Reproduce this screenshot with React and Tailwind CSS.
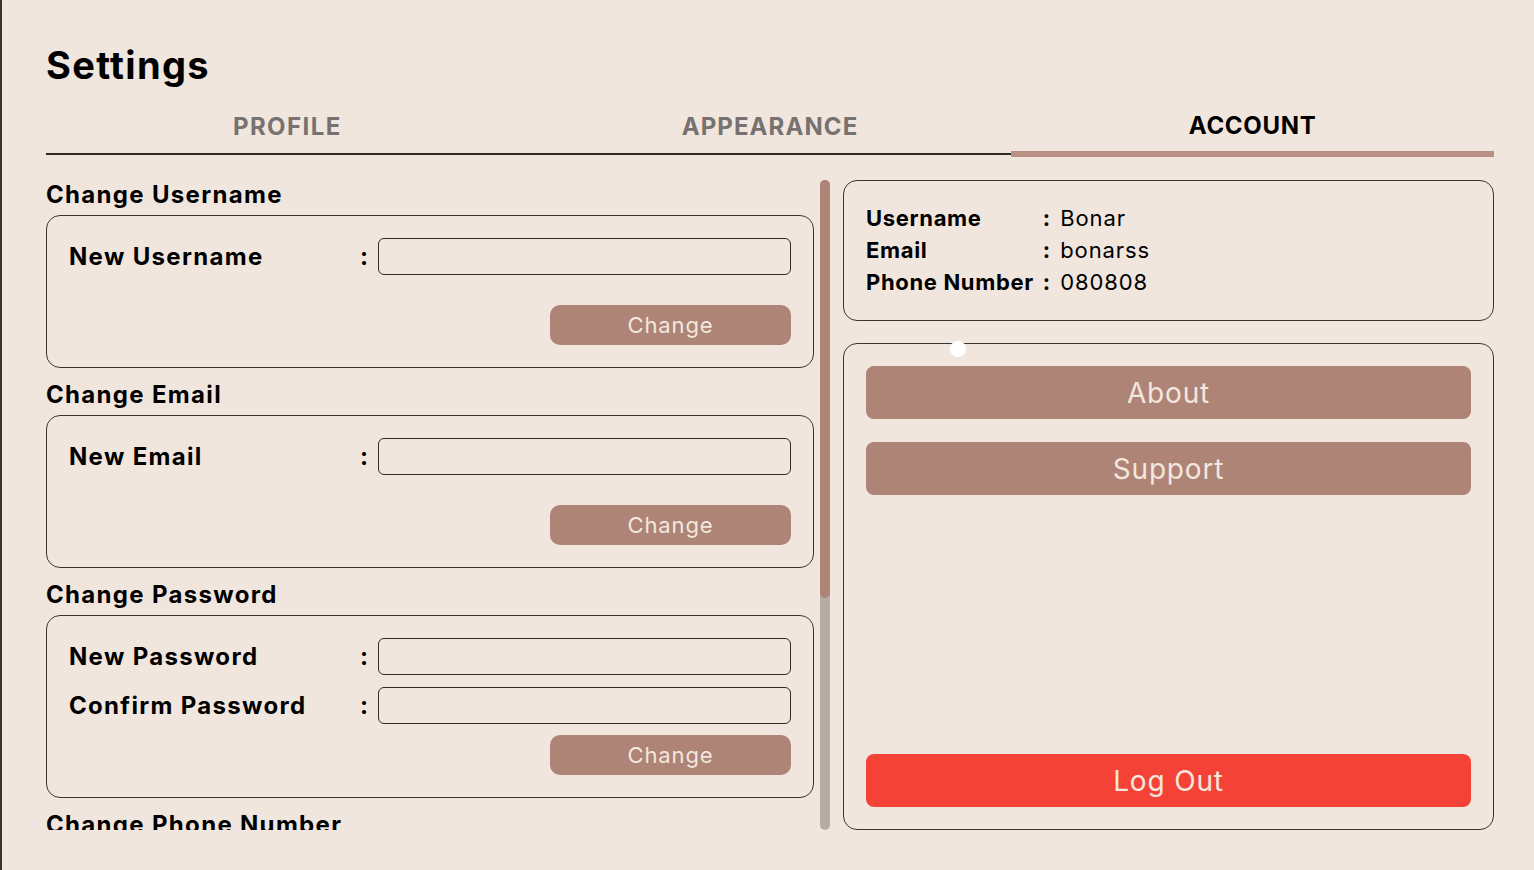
import React from 'react';

const font = { fontFamily: 'Inter, "Noto Sans", sans-serif' };

const Field = ({ label }) => (
  <div className="flex items-center">
    <span className="w-[288px] text-[24px] font-bold tracking-[0.055em] text-black">{label}</span>
    <span className="w-[14px] text-center text-[24px] font-bold text-black">:</span>
    <input
      type="text"
      className="ml-[7px] h-[37px] flex-1 rounded-[6px] border-[1.5px] border-[#2e2a28] bg-transparent px-2 outline-none"
    />
  </div>
);

const ChangeButton = ({ className = '' }) => (
  <button className={`ml-auto flex h-[40px] w-[241px] items-center justify-center rounded-[10px] bg-[#ae8477] text-[22px] tracking-[0.04em] text-[#f3e7de] ${className}`}>
    Change
  </button>
);

const Section = ({ title, children, className = '' }) => (
  <div className={className}>
    <h2 className="h-[28px] text-[24px] leading-[30px] font-bold tracking-[0.055em] text-black">{title}</h2>
    <div className="mt-[7px] rounded-[14px] border-[1.5px] border-[#3a3431] px-[22px] pt-[22px] pb-[22px]">
      {children}
    </div>
  </div>
);

const InfoRow = ({ label, value }) => (
  <>
    <span className="text-[22px] leading-[32px] font-bold tracking-[0.03em] text-black">{label}</span>
    <span className="pl-[9px] pr-[10px] text-[22px] leading-[32px] font-bold text-black">:</span>
    <span className="text-[22px] leading-[32px] tracking-[0.04em] text-black">{value}</span>
  </>
);

export default function App() {
  return (
    <div style={font} className="flex h-screen flex-col border-l-2 border-[#3a3330] bg-[#f0e6de] pt-[40px] pr-[40px] pb-[40px] pl-[44px]">
      <h1 className="text-[38px] leading-[50px] font-bold tracking-[0.035em] text-black">Settings</h1>

      <div className="mt-[10px] flex items-start">
        <div className="flex flex-1 flex-col">
          <div className="flex h-[53px] items-center justify-center text-[24px] font-bold tracking-[0.06em] text-[#777270]">PROFILE</div>
          <div className="h-[2px] bg-[#2f2a28]" />
        </div>
        <div className="flex flex-1 flex-col">
          <div className="flex h-[53px] items-center justify-center text-[24px] font-bold tracking-[0.045em] text-[#777270]">APPEARANCE</div>
          <div className="h-[2px] bg-[#2f2a28]" />
        </div>
        <div className="flex flex-1 flex-col">
          <div className="flex h-[51px] items-center justify-center text-[24px] font-bold tracking-[0.03em] text-black">ACCOUNT</div>
          <div className="h-[6px] bg-[#b89184]" />
        </div>
      </div>

      <div className="mt-[23px] flex min-h-0 flex-1">
        <div className="h-full w-[768px] overflow-hidden">
          <Section title="Change Username">
            <Field label="New Username" />
            <ChangeButton className="mt-[30px]" />
          </Section>

          <Section title="Change Email" className="mt-[12px]">
            <Field label="New Email" />
            <ChangeButton className="mt-[30px]" />
          </Section>

          <Section title="Change Password" className="mt-[12px]">
            <div className="flex flex-col gap-[12px]">
              <Field label="New Password" />
              <Field label="Confirm Password" />
            </div>
            <ChangeButton className="mt-[11px]" />
          </Section>

          <Section title="Change Phone Number" className="mt-[12px]">
            <Field label="New Phone Number" />
            <ChangeButton className="mt-[30px]" />
          </Section>
        </div>

        {/* scrollbar */}
        <div className="ml-[6px] flex h-full w-[10px] flex-col rounded-full bg-[#b5aca6]">
          <div className="h-[418px] rounded-full bg-[#ae8477]" />
        </div>

        <div className="ml-[13px] flex flex-1 flex-col gap-[22px]">
          <div className="rounded-[14px] border-[1.5px] border-[#3a3431] px-[22px] pt-[21px] pb-[22px]">
            <div className="grid grid-cols-[max-content_max-content_1fr]">
              <InfoRow label="Username" value="Bonar" />
              <InfoRow label="Email" value="bonarss" />
              <InfoRow label="Phone Number" value="080808" />
            </div>
          </div>

          <div className="relative flex flex-1 flex-col gap-[23px] rounded-[14px] border-[1.5px] border-[#3a3431] p-[22px]">
            <span className="absolute top-[-3px] left-[106px] h-[16px] w-[16px] rounded-full bg-white" />
            <button className="flex h-[53px] items-center justify-center rounded-[8px] bg-[#ae8477] text-[28px] tracking-[0.03em] text-[#f3e7de]">About</button>
            <button className="flex h-[53px] items-center justify-center rounded-[8px] bg-[#ae8477] text-[28px] tracking-[0.03em] text-[#f3e7de]">Support</button>
            <button className="mt-auto flex h-[53px] items-center justify-center rounded-[8px] bg-[#f44336] text-[28px] tracking-[0.03em] text-[#f3e7de]">Log Out</button>
          </div>
        </div>
      </div>
    </div>
  );
}
